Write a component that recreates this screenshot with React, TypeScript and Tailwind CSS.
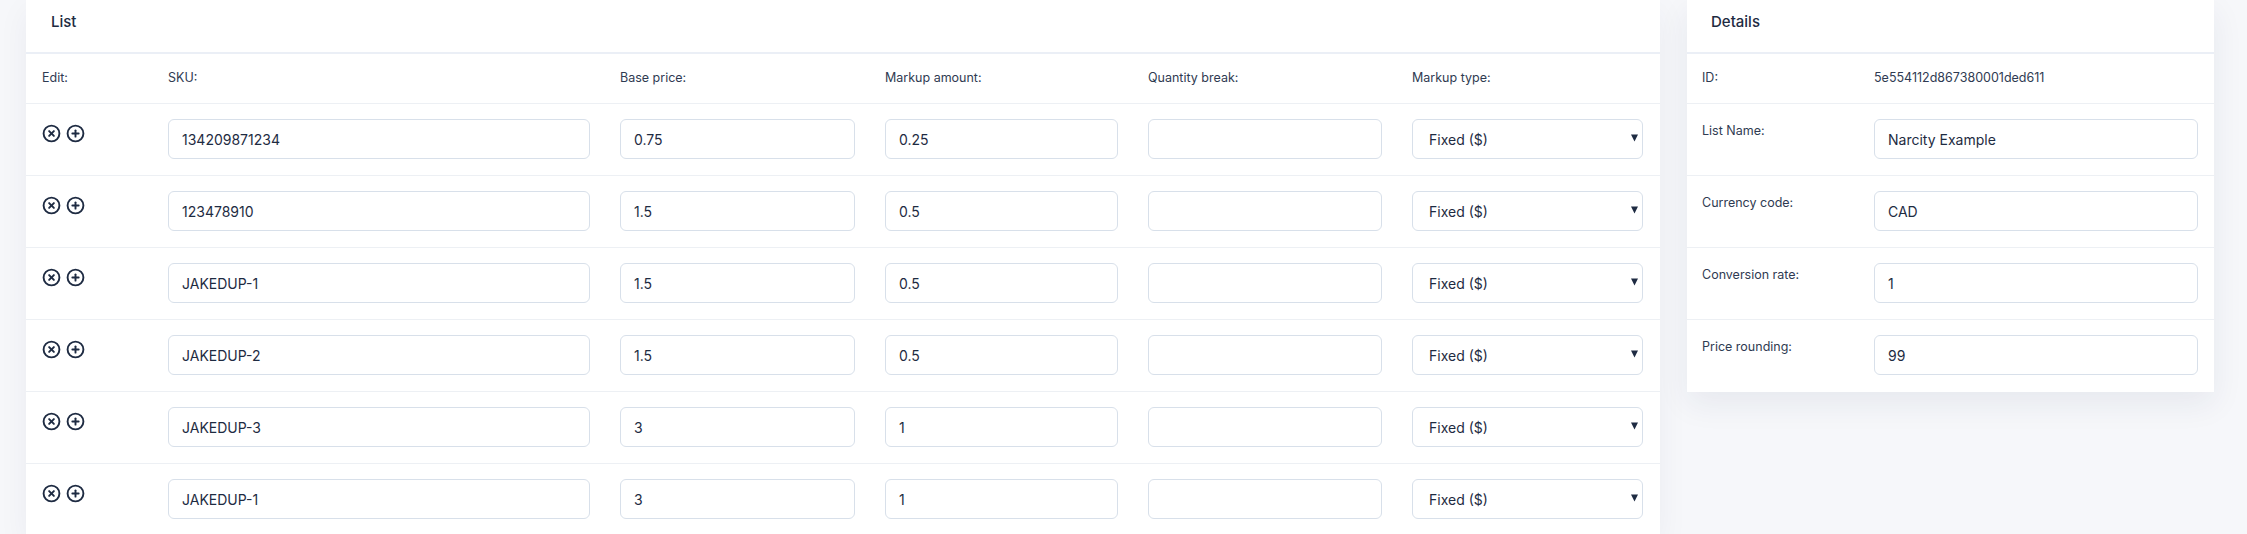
import React from "react";
import { CircleX, CirclePlus } from "lucide-react";

const rows = [
  { sku: "134209871234", base: "0.75", markup: "0.25" },
  { sku: "123478910", base: "1.5", markup: "0.5" },
  { sku: "JAKEDUP-1", base: "1.5", markup: "0.5" },
  { sku: "JAKEDUP-2", base: "1.5", markup: "0.5" },
  { sku: "JAKEDUP-3", base: "3", markup: "1" },
  { sku: "JAKEDUP-1", base: "3", markup: "1" },
];

const details = [
  { label: "List Name:", value: "Narcity Example" },
  { label: "Currency code:", value: "CAD" },
  { label: "Conversion rate:", value: "1" },
  { label: "Price rounding:", value: "99" },
];

const cols = "grid grid-cols-[96px_422px_235px_233px_234px_231px] gap-x-[30px]";

const Field = ({ value }: { value: string }) => (
  <input
    readOnly
    value={value}
    className="h-[40px] w-full rounded-[6px] border border-[#d8e0ea] bg-white px-[13px] text-[14px] text-[#1e2b42] outline-none"
  />
);

const SelectBox = () => (
  <div className="flex h-[40px] w-full items-center justify-between rounded-[6px] border border-[#d8e0ea] bg-white pl-[16px] pr-[4px] text-[14px] text-[#1e2b42]">
    <span>Fixed ($)</span>
    <svg width="7" height="8" viewBox="0 0 7 8" className="mt-[-2px]">
      <path d="M0 0.5h7L3.5 7.5z" fill="#1e2b42" />
    </svg>
  </div>
);

export default function App() {
  return (
    <div className="flex h-[534px] gap-[27px] overflow-hidden bg-[#f6f7fa] pl-[26px] pr-[33px] font-['Inter','Liberation_Sans',sans-serif] text-[#1e2b42]">
      {/* List card */}
      <div className="flex-1 self-start bg-white shadow-[0_10px_30px_rgba(30,45,80,0.05)]">
        <div className="flex h-[54px] items-center border-b-2 border-[#ebeff6] px-[25px] pb-[7px] text-[15px] font-medium">
          List
        </div>
        <div className={`${cols} h-[50px] items-center border-b border-[#edf0f4] px-4 text-[12.5px] text-[#2f3b52]`}>
          <span>Edit:</span>
          <span>SKU:</span>
          <span>Base price:</span>
          <span>Markup amount:</span>
          <span>Quantity break:</span>
          <span>Markup type:</span>
        </div>
        {rows.map((r, i) => (
          <div key={i} className={`${cols} h-[72px] border-b border-[#edf0f4] px-4 pt-[15px]`}>
            <div className="flex gap-[5px] pt-[5px]">
              <CircleX size={19} strokeWidth={2.4} />
              <CirclePlus size={19} strokeWidth={2.4} />
            </div>
            <Field value={r.sku} />
            <Field value={r.base} />
            <Field value={r.markup} />
            <Field value="" />
            <SelectBox />
          </div>
        ))}
      </div>

      {/* Details card */}
      <div className="w-[527px] self-start bg-white shadow-[0_12px_30px_rgba(30,45,80,0.07)]">
        <div className="flex h-[54px] items-center border-b-2 border-[#ebeff6] px-[24px] pb-[7px] text-[15px] font-medium">
          Details
        </div>
        <div className="grid h-[50px] grid-cols-[172px_1fr] items-center border-b border-[#edf0f4] px-[15px] text-[12.5px] text-[#2f3b52]">
          <span>ID:</span>
          <span>5e554112d867380001ded611</span>
        </div>
        {details.map((d, i) => (
          <div
            key={d.label}
            className={`grid h-[72px] grid-cols-[172px_1fr] px-[15px] pr-[16px] pt-[15px] ${i < details.length - 1 ? "border-b border-[#edf0f4]" : ""}`}
          >
            <span className="pt-[3px] text-[12.5px] text-[#2f3b52]">{d.label}</span>
            <Field value={d.value} />
          </div>
        ))}
      </div>
    </div>
  );
}
